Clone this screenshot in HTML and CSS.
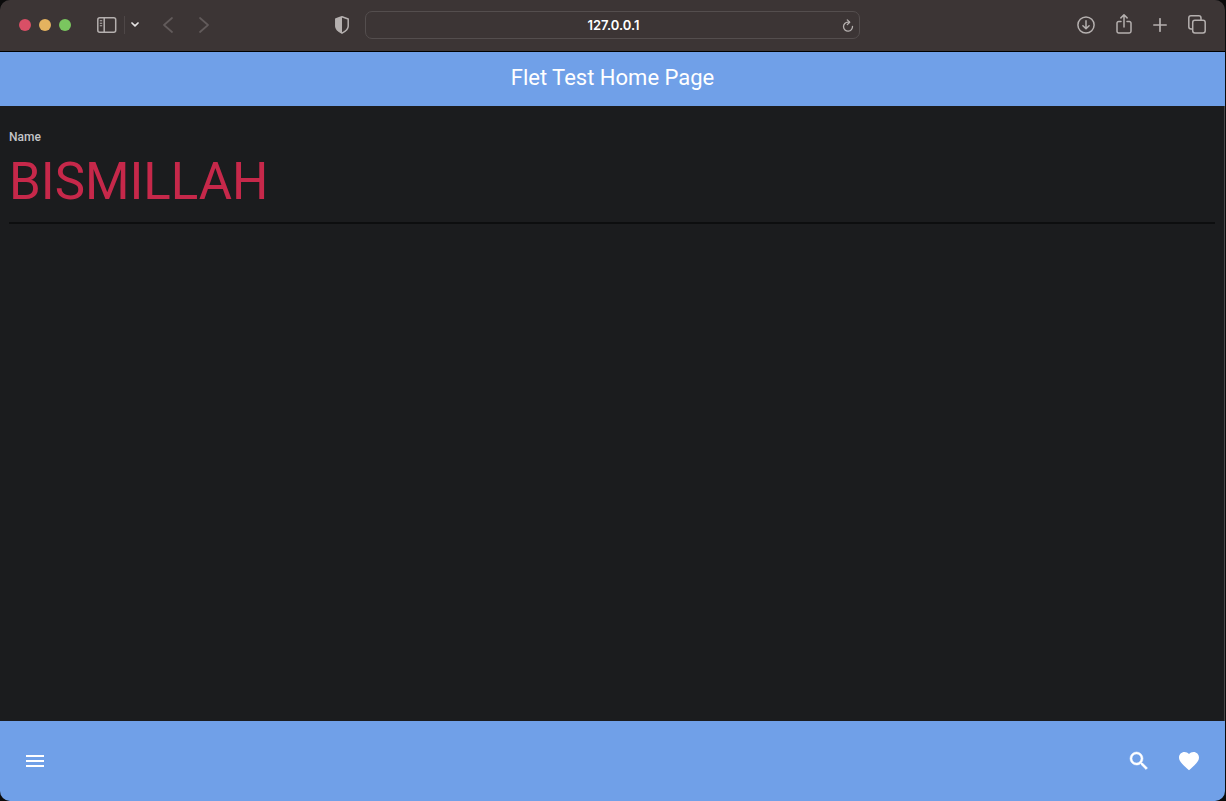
FILE: index.html
```html
<!DOCTYPE html>
<html lang="en">
<head>
<meta charset="utf-8">
<meta name="viewport" content="width=device-width, initial-scale=1">
<title>Flet Test Home Page</title>
<link rel="stylesheet" href="styles.css">
</head>
<body>
<div class="window">
  <header class="toolbar">
    <div class="tools-left">
      <div class="lights">
        <button class="light light-close" aria-label="Close"></button>
        <button class="light light-minimize" aria-label="Minimize"></button>
        <button class="light light-zoom" aria-label="Zoom"></button>
      </div>
      <div class="sidebar-group">
        <button class="tool" aria-label="Sidebar">
          <svg width="20" height="16" viewBox="0 0 20 16" fill="none" stroke="#b5b0af" stroke-width="1.5"><rect x="0.8" y="0.8" width="17.9" height="14.4" rx="2"/><path d="M7.2 1v14"/><path d="M2.8 3.8h2.4M2.8 6.3h2.4M2.8 8.8h2.4" stroke-width="1.1"/></svg>
        </button>
        <span class="divider"></span>
        <button class="tool" aria-label="Tab groups">
          <svg width="8" height="5" viewBox="0 0 8 5" fill="none" stroke="#e6e4e4" stroke-width="1.7" stroke-linecap="round" stroke-linejoin="round"><path d="M1 1l3 2.8L7 1"/></svg>
        </button>
      </div>
      <div class="history">
        <button class="tool" aria-label="Back" disabled>
          <svg width="10" height="16" viewBox="0 0 10 16" fill="none" stroke="#625b5b" stroke-width="1.7" stroke-linecap="round" stroke-linejoin="round"><path d="M9 1L1 8l8 7"/></svg>
        </button>
        <button class="tool" aria-label="Forward" disabled>
          <svg width="10" height="16" viewBox="0 0 10 16" fill="none" stroke="#625b5b" stroke-width="1.7" stroke-linecap="round" stroke-linejoin="round"><path d="M1 1l8 7-8 7"/></svg>
        </button>
      </div>
      <button class="tool shield" aria-label="Privacy report">
        <svg width="14" height="18" viewBox="0 0 14 18"><path d="M7 .8L13.2 3v7.2c0 3.3-3.2 5.4-6.2 7-3-1.600-6.200-3.700-6.200-7V3z" fill="none" stroke="#b5b0af" stroke-width="1.5" stroke-linejoin="round"/><path d="M7 .8L.8 3v7.200c0 3.300 3.200 5.400 6.200 7z" fill="#b5b0af"/></svg>
      </button>
    </div>
    <div class="address">
      <input class="address-input" type="text" value="127.0.0.1" aria-label="Address">
      <button class="tool reload" aria-label="Reload">
        <svg width="12" height="13" viewBox="0 0 12 13" fill="none" stroke="#b5b0af" stroke-width="1.3" stroke-linecap="round" stroke-linejoin="round"><path d="M7.300 3.200H6A4.500 4.500 0 1 0 10.500 7.300"/><path d="M5.300.9l2.400 2.300-2.400 2.400"/></svg>
      </button>
    </div>
    <div class="tools-right">
      <button class="tool" aria-label="Downloads">
        <svg width="18" height="18" viewBox="0 0 18 18" fill="none" stroke="#b5b0af" stroke-width="1.5" stroke-linecap="round" stroke-linejoin="round"><circle cx="9" cy="9" r="8.100"/><path d="M9 4.800v7.800M5.900 9.700L9 12.800l3.100-3.100"/></svg>
      </button>
      <button class="tool" aria-label="Share">
        <svg width="16" height="21" viewBox="0 0 16 21" fill="none" stroke="#b5b0af" stroke-width="1.500" stroke-linecap="round" stroke-linejoin="round"><path d="M5 7.500H2.700A1.700 1.700 0 0 0 1 9.200v8.100A1.700 1.700 0 0 0 2.700 19h10.600a1.700 1.700 0 0 0 1.700-1.700V9.200a1.700 1.700 0 0 0-1.700-1.700H11"/><path d="M8 13V1M4.900 3.900L8 .8l3.100 3.100"/></svg>
      </button>
      <button class="tool" aria-label="New tab">
        <svg width="14" height="14" viewBox="0 0 14 14" fill="none" stroke="#b5b0af" stroke-width="1.700" stroke-linecap="round"><path d="M7 .8v12.400M.8 7h12.400"/></svg>
      </button>
      <button class="tool" aria-label="Tab overview">
        <svg width="18" height="19" viewBox="0 0 18 19" fill="none" stroke="#b5b0af" stroke-width="1.500" stroke-linejoin="round"><rect x="4.700" y="5.200" width="12.500" height="12.800" rx="2.200"/><path d="M4.700 14H3A2.200 2.200 0 0 1 .8 11.800V3A2.200 2.200 0 0 1 3 .8h7.800A2.200 2.200 0 0 1 13 3v2.200"/></svg>
      </button>
    </div>
  </header>
  <div class="app-bar"><h1 class="app-title">Flet Test Home Page</h1></div>
  <main class="content">
    <div class="field">
      <label class="field-label" for="name">Name</label>
      <input class="field-input" id="name" type="text" value="BISMILLAH">
    </div>
  </main>
  <footer class="bottom-bar">
    <button class="icon-button" aria-label="Menu">
      <svg width="24" height="24" viewBox="0 0 24 24" fill="#fff"><path d="M3 18h18v-2H3v2zm0-5h18v-2H3v2zm0-7v2h18V6H3z"/></svg>
    </button>
    <div class="actions">
      <button class="icon-button" aria-label="Search">
        <svg width="24" height="24" viewBox="0 0 24 24" fill="#fff" stroke="#fff" stroke-width="0.500"><path d="M15.500 14h-.79l-.28-.27A6.471 6.471 0 0 0 16 9.500 6.500 6.500 0 1 0 9.500 16c1.610 0 3.090-.59 4.230-1.570l.27.28v.79l5 4.990L20.490 19l-4.990-5zm-6 0C7.010 14 5 11.990 5 9.500S7.010 5 9.500 5 14 7.010 14 9.500 11.990 14 9.500 14z"/></svg>
      </button>
      <button class="icon-button" aria-label="Favorite">
        <svg width="24" height="24" viewBox="0 0 24 24" fill="#fff"><path d="M12 21.350l-1.450-1.320C5.400 15.360 2 12.280 2 8.500 2 5.420 4.420 3 7.500 3c1.740 0 3.410.81 4.500 2.090C13.090 3.810 14.760 3 16.500 3 19.580 3 22 5.420 22 8.500c0 3.780-3.400 6.860-8.550 11.540L12 21.350z"/></svg>
      </button>
    </div>
  </footer>
</div>
</body>
</html>
```
FILE: styles.css
```css
* {
  box-sizing: border-box;
}

body {
  margin: 0;
  padding-right: 1px;
  background: #0b0b0b;
  font-family: Roboto, sans-serif;
}

button {
  padding: 0;
  border: 0;
  background: none;
}

svg {
  display: block;
}

.window {
  display: flex;
  flex-direction: column;
  min-height: 100vh;
  overflow: hidden;
  border-radius: 10px;
  background: #1b1c1e;
}

.toolbar {
  display: grid;
  grid-template-columns: 1fr minmax(0, 495px) 1fr;
  align-items: center;
  height: 52px;
  padding-bottom: 2px;
  border-bottom: 1px solid #000;
  background: #3c3535;
}

.tools-left {
  display: flex;
  align-items: center;
  padding: 0 16px 0 19px;
}

.lights {
  display: flex;
  gap: 8px;
  margin-right: 26px;
}

.light {
  width: 12px;
  height: 12px;
  border-radius: 50%;
}

.light-close {
  background: #d94f66;
}

.light-minimize {
  background: #e4b35f;
}

.light-zoom {
  background: #7ac65f;
}

.sidebar-group {
  display: flex;
  align-items: center;
  gap: 6px;
  margin-right: 24px;
}

.divider {
  width: 1px;
  height: 18px;
  margin-left: 1px;
  background: #4e4747;
}

.history {
  display: flex;
  gap: 26px;
}

.shield {
  margin-left: auto;
}

.address {
  display: flex;
  align-items: center;
  height: 28px;
  padding: 0 5px 0 19px;
  border: 1px solid #544e4e;
  border-radius: 7px;
}

.address-input {
  flex: 1;
  min-width: 0;
  padding: 0;
  border: 0;
  outline: 0;
  background: none;
  color: #fff;
  font: 600 13px/20px Inter, sans-serif;
  text-align: center;
}

.reload {
  padding-top: 2px;
}

.tools-right {
  display: flex;
  align-items: center;
  justify-content: flex-end;
  gap: 21px;
  padding-right: 19px;
}

.app-bar {
  padding: 12px 16px 14px;
  background: #70a0e8;
  text-align: center;
}

.app-title {
  margin: 0;
  color: #fff;
  font-size: 22px;
  font-weight: 400;
  line-height: 28px;
}

.content {
  flex: 1;
  padding: 23px 9px;
  border-right: 1px solid #48484a;
}

.field {
  display: flex;
  flex-direction: column;
  border-bottom: 2px solid #0d0e0f;
}

.field-label {
  color: #c3c4c8;
  font-size: 12px;
  font-weight: 500;
  line-height: 16px;
}

.field-input {
  width: 100%;
  padding: 8px 0 11px;
  border: 0;
  outline: 0;
  background: none;
  color: #c6284a;
  font: 400 51px/58px Roboto, sans-serif;
}

.bottom-bar {
  display: flex;
  align-items: center;
  justify-content: space-between;
  height: 80px;
  padding: 0 13px 0 12px;
  background: #70a0e8;
}

.actions {
  display: flex;
  gap: 4px;
}

.icon-button {
  display: grid;
  place-items: center;
  width: 46px;
  height: 46px;
}
```
